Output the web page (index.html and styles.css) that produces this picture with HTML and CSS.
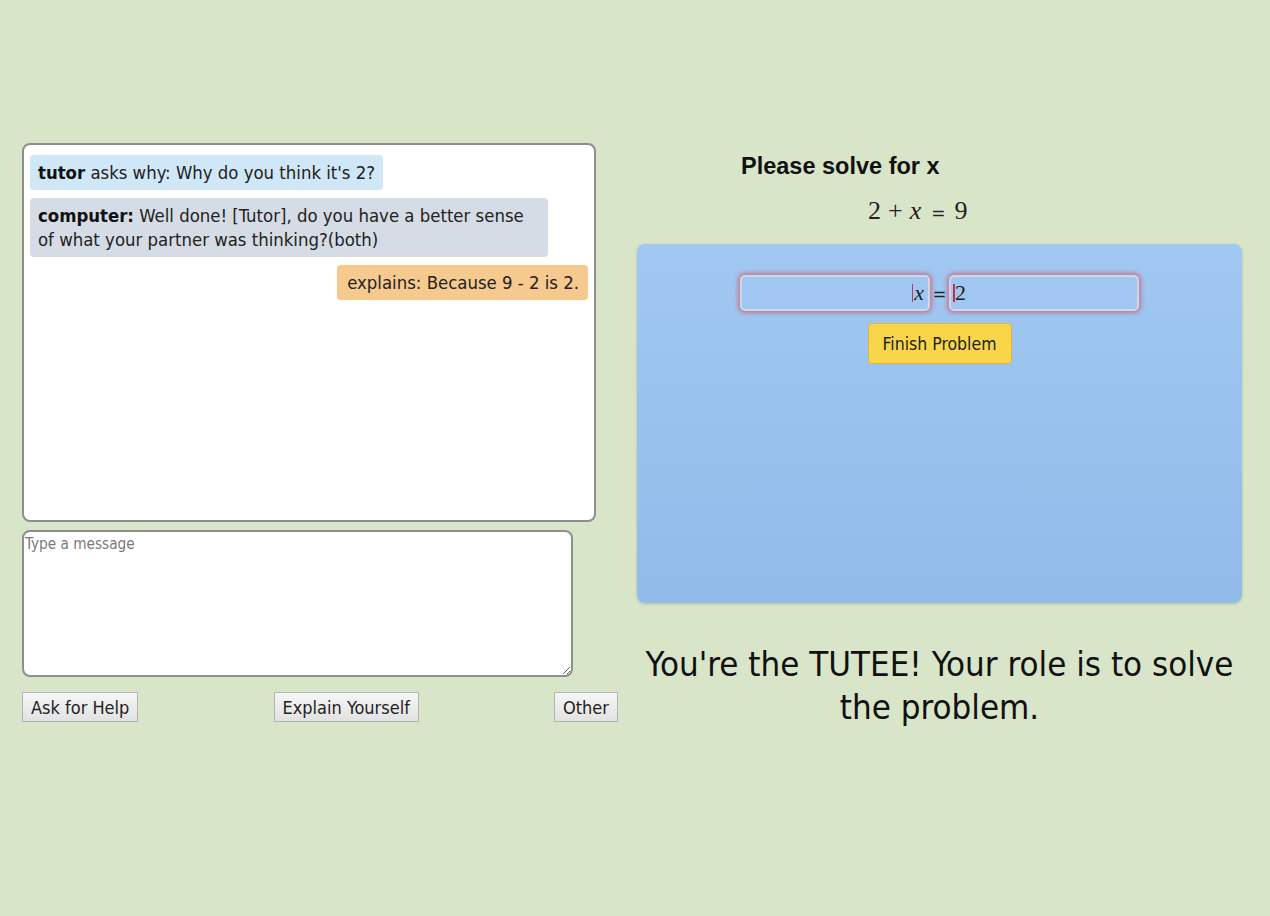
FILE: index.html
```html
<!DOCTYPE html>
<html>
<head>
<meta charset="utf-8">
<link rel="stylesheet" href="styles.css">
</head>
<body>
<div class="page">
  <div class="left">
    <div class="chat">
      <div class="msg tutor"><b>tutor</b> asks why: Why do you think it's 2?</div>
      <div class="msg computer"><b>computer:</b> Well done! [Tutor], do you have a better sense of what your partner was thinking?(both)</div>
      <div class="msg mine">explains: Because 9 - 2 is 2.</div>
    </div>
    <textarea class="compose" placeholder="Type a message"></textarea>
    <div class="actions">
      <button class="btn">Ask for Help</button>
      <button class="btn">Explain Yourself</button>
      <button class="btn">Other</button>
    </div>
  </div>
  <div class="right">
    <h2 class="title">Please solve for x</h2>
    <div class="equation"><span class="num">2</span><span class="op">+</span><span class="var">x</span><span class="eq">=</span><span class="num">9</span></div>
    <div class="board">
      <div class="row">
        <div class="field left-field"><span class="caret light"></span><span class="var">x</span></div>
        <span class="equals">=</span>
        <div class="field right-field"><span class="caret"></span><span class="num">2</span></div>
      </div>
      <button class="finish">Finish Problem</button>
    </div>
    <p class="role">You're the TUTEE! Your role is to solve the problem.</p>
  </div>
</div>
</body>
</html>
```
FILE: styles.css
```css
html, body {
  margin: 0;
  padding: 0;
  background: #d9e5c8;
  height: 100%;
}
body {
  font-family: "DejaVu Sans Condensed", "DejaVu Sans", sans-serif;
  color: #1a1a1a;
}
.page {
  display: flex;
  padding: 143px 0 0 22px;
  gap: 19px;
}
.left {
  width: 596px;
  display: flex;
  flex-direction: column;
}
.chat {
  box-sizing: border-box;
  width: 574px;
  height: 379px;
  background: #fff;
  border: 2px solid #8e8e8e;
  border-radius: 8px;
  padding: 10px 6px;
  display: flex;
  flex-direction: column;
  align-items: flex-start;
  gap: 8px;
}
.msg {
  font-size: 18.4px;
  line-height: 24px;
  padding: 6px 8px 5px;
  border-radius: 4px;
  max-width: 502px;
  color: #222;
}
.msg b { color: #111; }
.tutor { background: #cfe7f6; }
.computer { background: #d5dce5; }
.mine {
  background: #f6c98f;
  align-self: flex-end;
  padding: 6px 9px 5px 10px;
}
.compose {
  box-sizing: border-box;
  margin: 8px 0 0 0;
  width: 551px;
  height: 147px;
  border: 2px solid #8e8e8e;
  border-radius: 8px;
  background: #fff;
  padding: 3px 1px;
  font-family: "DejaVu Sans Condensed", "DejaVu Sans", sans-serif;
  font-size: 15.2px;
  resize: vertical;
  outline: none;
}
.compose::placeholder { color: #7a7a7a; }
.actions {
  display: flex;
  justify-content: space-between;
  margin-top: 15px;
}
.btn {
  font-family: "DejaVu Sans Condensed", "DejaVu Sans", sans-serif;
  font-size: 18px;
  height: 30px;
  padding: 0 8px;
  border: 1px solid #b3b3b3;
  border-radius: 0;
  background: linear-gradient(#f6f6f6, #e2e2e2);
  color: #222;
}
.right {
  width: 605px;
  display: flex;
  flex-direction: column;
}
.title {
  font-family: "Liberation Sans", Arial, sans-serif;
  font-weight: bold;
  font-size: 23.5px;
  line-height: 26px;
  margin: 10px 0 0 104px;
  color: #111;
}
.equation {
  margin: 18px 0 0 231px;
  font-family: "Liberation Serif", "DejaVu Serif", serif;
  font-size: 26px;
  line-height: 28px;
  color: #222;
  display: flex;
  align-items: baseline;
}
.equation .op { margin: 0 7px; }
.equation .eq {
  font-family: "DejaVu Sans", sans-serif;
  font-size: 17px;
  margin: 0 9px 0 10px;
}
.var { font-style: italic; }
.board {
  margin-top: 17px;
  height: 359px;
  border-radius: 8px;
  background: linear-gradient(#a0c8f2, #92bbea);
  box-shadow: 0 1px 3px rgba(0,0,0,0.18);
  display: flex;
  flex-direction: column;
  align-items: center;
  padding-top: 31px;
  box-sizing: border-box;
}
.row {
  display: flex;
  align-items: center;
  gap: 0;
}
.field {
  box-sizing: border-box;
  width: 190px;
  height: 36px;
  border: 2px solid #d0d6e2;
  border-radius: 5px;
  background: #9fc7f1;
  box-shadow: 0 0 4px 2px rgba(214, 78, 100, 0.65);
  display: flex;
  align-items: center;
  font-family: "Liberation Serif", "DejaVu Serif", serif;
  font-size: 22px;
  color: #222;
}
.left-field { justify-content: flex-end; padding-right: 4px; }
.right-field { padding-left: 2px; }
.caret {
  width: 0;
  height: 18px;
  border-left: 2px solid #c0304a;
}
.caret.light { border-left: 1px solid #b04060; margin-right: 1px; }
.equals {
  font-size: 18px;
  width: 19px;
  text-align: center;
  color: #222;
}
.finish {
  margin-top: 12px;
  height: 41px;
  padding: 0 14px;
  font-family: "DejaVu Sans Condensed", "DejaVu Sans", sans-serif;
  font-size: 17.5px;
  background: #f9d647;
  border: 1px solid #e0b53a;
  border-radius: 4px;
  color: #222;
}
.role {
  margin: 40px 0 0 0;
  text-align: center;
  font-size: 34.6px;
  line-height: 43px;
  color: #111;
}
```
